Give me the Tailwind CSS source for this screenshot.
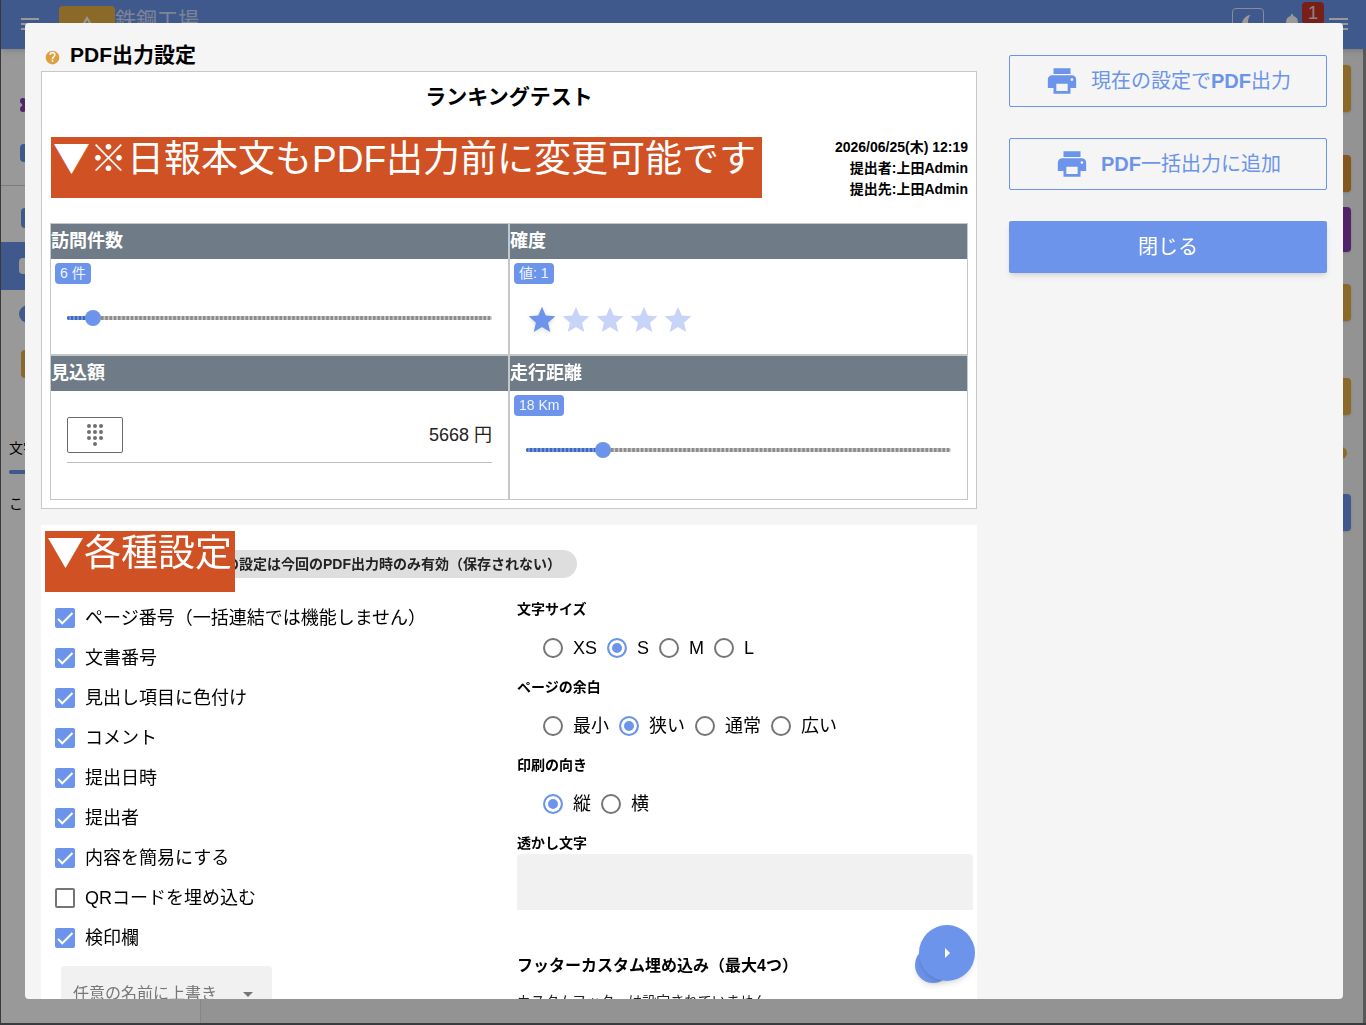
<!DOCTYPE html>
<html lang="ja">
<head>
  <meta charset="UTF-8" />
  <meta name="viewport" content="width=device-width, initial-scale=1" />
  <title>PDF出力設定</title>
  <script src="https://cdn.jsdelivr.net/npm/@tailwindcss/browser@4"></script>
</head>
<body class="h-screen overflow-hidden font-['Liberation_Sans','Noto_Sans_CJK_JP',sans-serif] text-black">

  <!-- 背面の日報画面 -->
  <div class="h-full flex flex-col border-l border-l-[#616164] border-b-2 border-b-[#5c6470] bg-[#f5f5f5]">
    <header class="h-[49px] shrink-0 bg-[#6b94ea] shadow-md flex items-start pl-5 pr-[18px] z-10">
      <svg class="w-[18px] h-3 mt-[18px]" viewBox="0 0 18 12" fill="#fff"><path d="M0 0h18v2H0zM0 5h18v2H0zM0 10h18v2H0z" /></svg>
      <div class="ml-5 mt-1.5 w-14 h-9 rounded-sm bg-[#e8b044] flex justify-center pt-2">
        <svg class="w-6 h-6" viewBox="0 0 24 24" fill="none" stroke="#fff" stroke-width="2"><path d="M12 4 22 21H2z" /></svg>
      </div>
      <span class="text-[21px] leading-8 mt-1 text-white/70">鉄鋼工場</span>
      <div class="ml-auto mt-2 w-8 h-8 rounded-sm border border-white/80 flex justify-center pt-1">
        <svg class="w-5 h-5" viewBox="0 0 24 24" fill="#fff"><path d="M15 2C10 3 5 7 5 13c0 5 4 9 9 9 3 0 5-1 7-3-5 0-9-3-9-8 0-4 1-6 3-9z" /></svg>
      </div>
      <svg class="ml-[18px] mt-3 w-5 h-5" viewBox="0 0 24 24" fill="#fff"><path d="M12 22a2 2 0 0 0 2-2h-4a2 2 0 0 0 2 2zm7-6v-5c0-3-2-5.600-5.500-6.300V4a1.500 1.500 0 0 0-3 0v.7C7 5.400 5 7.900 5 11v5l-2 2v1h18v-1z" /></svg>
      <span class="mt-0.5 w-[22px] h-[22px] rounded-sm bg-[#c8352a] text-white/80 text-lg leading-[22px] text-center">1</span>
      <svg class="ml-[5px] mt-[18px] w-[19px] h-3" viewBox="0 0 19 12" fill="#fff"><path d="M0 0h19v2H0zM0 5h19v2H0zM0 10h19v2H0z" /></svg>
    </header>
    <div class="flex-1 flex">
      <aside class="w-[200px] bg-white border-r border-[#e0e0e0] pt-8">
        <div class="h-12 pl-[18px] flex items-center"><svg class="w-4 h-4" viewBox="0 0 16 16" fill="#883cb0"><circle cx="4" cy="4" r="3" /><circle cx="4" cy="12" r="3" /><circle cx="12" cy="4" r="3" /><circle cx="12" cy="12" r="3" /><circle cx="8" cy="8" r="5" /></svg></div>
        <div class="h-12 pl-[19px] flex items-center"><div class="w-[18px] h-[18px] rounded-sm bg-[#6b94ea]"></div></div>
        <div class="mt-2 border-t border-[#d0d0d0] pt-2">
          <div class="h-12 pl-5 flex items-center"><div class="w-4 h-5 rounded-sm bg-[#6b94ea]"></div></div>
          <div class="h-12 pl-[18px] flex items-center bg-[#6b94ea]"><div class="w-5 h-4 rounded-sm bg-white"></div></div>
          <div class="h-12 pl-[18px] flex items-center"><div class="w-[18px] h-[18px] rounded-full bg-[#6b94ea]"></div></div>
          <div class="h-[52px] pl-5 flex items-center"><div class="w-4 h-7 rounded-sm bg-[#e8b044]"></div></div>
        </div>
        <p class="pl-2 mt-12 text-sm leading-5">文字</p>
        <div class="ml-2 mt-3 mr-8 h-1 rounded-full bg-[#6b94ea]"></div>
        <p class="pl-2 mt-5 text-sm leading-5">こ</p>
      </aside>
      <div class="flex-1 flex flex-col items-end pt-4 pr-3 border-r-[3px] border-[#959595]">
        <div class="w-20 h-[47px] rounded-sm shadow bg-[#e8b044]"></div>
        <div class="w-20 h-[37px] mt-[43px] rounded-sm shadow bg-[#dd9233]"></div>
        <div class="w-20 h-[45px] mt-[15px] rounded-sm shadow bg-[#883cb0]"></div>
        <div class="w-20 h-[37px] mt-8 rounded-sm shadow bg-[#e8b044]"></div>
        <div class="w-20 h-[37px] mt-[57px] rounded-sm shadow bg-[#e8b044]"></div>
        <div class="w-3 h-3 mt-8 mr-1 rounded-full bg-[#e8b044]"></div>
        <div class="w-20 h-[37px] mt-[35px] rounded-sm shadow bg-[#6b94ea]"></div>
      </div>
    </div>
  </div>

  <!-- モーダル -->
  <div class="fixed inset-0 z-20 bg-black/40 pt-[23px] pr-[23px] pb-[26px] pl-[25px]">
    <div role="dialog" aria-labelledby="dialog-title" class="relative h-full overflow-hidden rounded bg-[#f5f5f5] flex gap-8 px-4">

      <div class="flex-1 min-w-0 overflow-y-auto [scrollbar-width:none] pt-4">
        <div class="flex items-center h-8 pl-1 gap-2.5">
          <svg class="w-[15px] h-[15px] mt-1" viewBox="0 0 24 24" fill="#dda03c"><path d="M12 1a11 11 0 1 0 0 22 11 11 0 0 0 0-22zm1.300 18h-2.600v-2.600h2.600zm2.600-8.700-1.100 1.200c-.9.900-1.500 1.700-1.500 3.500h-2.600v-.6c0-1.400.6-2.600 1.500-3.500l1.500-1.500c.4-.4.600-.9.600-1.500a2.300 2.300 0 0 0-4.600 0H7a5 5 0 0 1 10 0c0 1-.4 1.900-1.100 2.400z" /></svg>
          <h1 id="dialog-title" class="text-[21px] leading-8 font-bold">PDF出力設定</h1>
        </div>

        <!-- プレビュー -->
        <section class="bg-white border border-[#c8c8c8] px-2 pb-2">
          <h2 class="text-center text-[21px] leading-[49px] font-bold">ランキングテスト</h2>
          <div class="flex justify-between items-start pt-4">
            <p class="ml-px h-[61px] bg-[#cf5124] text-white text-[37px] leading-[38px] pl-0.5 pr-1.5 whitespace-nowrap"><span class="font-['Noto_Sans_CJK_JP',sans-serif]">▼</span>※日報本文もPDF出力前に変更可能です</p>
            <div class="text-right text-sm leading-[21px] font-bold">
              <p>2026/06/25(木) 12:19</p>
              <p>提出者:上田Admin</p>
              <p>提出先:上田Admin</p>
            </div>
          </div>

          <div class="mt-[23px] grid grid-cols-2">
            <div class="border border-[#c5c8c9] h-[132px]">
              <h3 class="bg-[#6f7b86] text-white text-lg leading-[35px] font-bold">訪問件数</h3>
              <div class="p-1 pb-px"><span class="inline-block align-top rounded bg-[#6b94ea] text-white/90 text-sm leading-[21px] px-[5px]">6 件</span></div>
              <div class="px-4 pt-5">
                <div class="relative h-[20px] flex items-center">
                  <div class="w-full h-1 rounded-full bg-[linear-gradient(to_right,#8c8c8c_50%,#c8c8c8_50%)] bg-[length:1%_100%]"></div>
                  <div class="absolute left-0 h-1 rounded-l-full bg-[repeating-linear-gradient(to_right,#4468b0_0_2px,#6b94ea_2px_4px)]" style="width: 6%"></div>
                  <input type="range" min="0" max="100" value="6" aria-label="訪問件数" class="absolute -inset-x-2 h-4 appearance-none bg-transparent [&::-webkit-slider-thumb]:appearance-none [&::-webkit-slider-thumb]:w-4 [&::-webkit-slider-thumb]:h-4 [&::-webkit-slider-thumb]:rounded-full [&::-webkit-slider-thumb]:bg-[#6b94ea]" />
                </div>
              </div>
            </div>
            <div class="border border-[#c5c8c9] h-[132px]">
              <h3 class="bg-[#6f7b86] text-white text-lg leading-[35px] font-bold">確度</h3>
              <div class="p-1 pb-px"><span class="inline-block align-top rounded bg-[#6b94ea] text-white/90 text-sm leading-[21px] px-[5px]">値: 1</span></div>
              <div class="flex gap-0.5 px-4 pt-4">
                <svg class="w-8 h-8 drop-shadow-sm" viewBox="0 0 24 24" fill="#6b94ea"><path d="M12 17.270 18.180 21l-1.640-7.030L22 9.240l-7.190-.61L12 2 9.190 8.630 2 9.240l5.460 4.730L5.820 21z" /></svg>
                <svg class="w-8 h-8" viewBox="0 0 24 24" fill="#c8d4f7"><path d="M12 17.270 18.180 21l-1.640-7.030L22 9.240l-7.190-.61L12 2 9.190 8.630 2 9.240l5.460 4.730L5.820 21z" /></svg>
                <svg class="w-8 h-8" viewBox="0 0 24 24" fill="#c8d4f7"><path d="M12 17.270 18.180 21l-1.640-7.030L22 9.240l-7.190-.61L12 2 9.190 8.630 2 9.240l5.460 4.730L5.820 21z" /></svg>
                <svg class="w-8 h-8" viewBox="0 0 24 24" fill="#c8d4f7"><path d="M12 17.270 18.180 21l-1.640-7.030L22 9.240l-7.190-.61L12 2 9.190 8.630 2 9.240l5.460 4.730L5.820 21z" /></svg>
                <svg class="w-8 h-8" viewBox="0 0 24 24" fill="#c8d4f7"><path d="M12 17.270 18.180 21l-1.640-7.030L22 9.240l-7.190-.61L12 2 9.190 8.630 2 9.240l5.460 4.730L5.820 21z" /></svg>
              </div>
            </div>
            <div class="border border-[#c5c8c9] h-[145px]">
              <h3 class="bg-[#6f7b86] text-white text-lg leading-[35px] font-bold">見込額</h3>
              <div class="mx-4 mt-[26px] pb-[9px] border-b border-[#bdbdbd] flex items-center justify-between">
                <button type="button" aria-label="電卓" class="w-14 h-9 shrink-0 rounded-xs border border-[#6a6a6a] flex items-center justify-center">
                  <svg class="w-6 h-6" viewBox="0 0 24 24" fill="#6f6f6f"><circle cx="6" cy="3" r="2" /><circle cx="12" cy="3" r="2" /><circle cx="18" cy="3" r="2" /><circle cx="6" cy="9" r="2" /><circle cx="12" cy="9" r="2" /><circle cx="18" cy="9" r="2" /><circle cx="6" cy="15" r="2" /><circle cx="12" cy="15" r="2" /><circle cx="18" cy="15" r="2" /><circle cx="12" cy="21" r="2" /></svg>
                </button>
                <input type="text" value="5668 円" aria-label="見込額" class="min-w-0 flex-1 text-right text-lg text-[#222] bg-transparent" />
              </div>
            </div>
            <div class="border border-[#c5c8c9] h-[145px]">
              <h3 class="bg-[#6f7b86] text-white text-lg leading-[35px] font-bold">走行距離</h3>
              <div class="p-1 pb-px"><span class="inline-block align-top rounded bg-[#6b94ea] text-white/90 text-sm leading-[21px] px-[5px]">18 Km</span></div>
              <div class="px-4 pt-5">
                <div class="relative h-[20px] flex items-center">
                  <div class="w-full h-1 rounded-full bg-[linear-gradient(to_right,#8c8c8c_50%,#c8c8c8_50%)] bg-[length:1%_100%]"></div>
                  <div class="absolute left-0 h-1 rounded-l-full bg-[repeating-linear-gradient(to_right,#4468b0_0_2px,#6b94ea_2px_4px)]" style="width: 18%"></div>
                  <input type="range" min="0" max="100" value="18" aria-label="走行距離" class="absolute -inset-x-2 h-4 appearance-none bg-transparent [&::-webkit-slider-thumb]:appearance-none [&::-webkit-slider-thumb]:w-4 [&::-webkit-slider-thumb]:h-4 [&::-webkit-slider-thumb]:rounded-full [&::-webkit-slider-thumb]:bg-[#6b94ea]" />
                </div>
              </div>
            </div>
          </div>
        </section>

        <!-- 各種設定 -->
        <section class="mt-4 bg-white px-1 pt-1.5 pb-8">
          <div class="flex items-end">
            <h2 class="relative z-10 h-[61px] bg-[#cf5124] text-white text-[37px] leading-[38px] pl-0.5 pr-[3px] whitespace-nowrap"><span class="font-['Noto_Sans_CJK_JP',sans-serif]">▼</span>各種設定</h2>
            <p class="-ml-10 mb-3.5 rounded-full bg-[#dedede] text-[#222] text-sm leading-7 font-bold px-4 whitespace-nowrap">この設定は今回のPDF出力時のみ有効（保存されない）</p>
          </div>

          <div class="grid grid-cols-2 pt-1.5">
            <div class="pl-2.5" id="checks"></div>

            <div class="pl-2">
              <fieldset class="h-[78px]">
                <legend class="text-sm leading-[22px] font-bold">文字サイズ</legend>
                <div class="flex gap-2.5 pl-[26px] pt-3 text-lg leading-8" data-name="size" data-options="XS,S,M,L" data-value="S"></div>
              </fieldset>
              <fieldset class="h-[78px]">
                <legend class="text-sm leading-[22px] font-bold">ページの余白</legend>
                <div class="flex gap-2.5 pl-[26px] pt-3 text-lg leading-8" data-name="margin" data-options="最小,狭い,通常,広い" data-value="狭い"></div>
              </fieldset>
              <fieldset class="h-[78px]">
                <legend class="text-sm leading-[22px] font-bold">印刷の向き</legend>
                <div class="flex gap-2.5 pl-[26px] pt-3 text-lg leading-8" data-name="direction" data-options="縦,横" data-value="縦"></div>
              </fieldset>
              <label for="watermark" class="block text-sm leading-[22px] font-bold">透かし文字</label>
              <input id="watermark" type="text" class="block w-full h-14 rounded-t bg-[#f1f1f1] px-3 text-base" />
              <h3 class="mt-11 text-base leading-6 font-bold">フッターカスタム埋め込み（最大4つ）</h3>
              <p class="mt-3 text-sm leading-[22px] text-[#222]">カスタムフッターは設定されていません</p>
            </div>
          </div>
        </section>
      </div>

      <!-- 操作ボタン -->
      <div class="w-[318px] shrink-0 flex flex-col gap-[31px] pt-8 text-xl">
        <button type="button" class="h-[52px] rounded-xs border border-[#6b94ea] text-[#6b94ea] flex items-center justify-center gap-3">
          <svg class="w-[34px] h-[34px]" viewBox="0 0 24 24" fill="currentColor"><path d="M19 8H5a3 3 0 0 0-3 3v6h4v4h12v-4h4v-6a3 3 0 0 0-3-3zm-3 11H8v-5h8zm3-7a1 1 0 1 1 0-2 1 1 0 0 1 0 2zM18 3H6v4h12z" /></svg>
          <span>現在の設定で<span class="font-bold">PDF</span>出力</span>
        </button>
        <button type="button" class="h-[52px] rounded-xs border border-[#6b94ea] text-[#6b94ea] flex items-center justify-center gap-3">
          <svg class="w-[34px] h-[34px]" viewBox="0 0 24 24" fill="currentColor"><path d="M19 8H5a3 3 0 0 0-3 3v6h4v4h12v-4h4v-6a3 3 0 0 0-3-3zm-3 11H8v-5h8zm3-7a1 1 0 1 1 0-2 1 1 0 0 1 0 2zM18 3H6v4h12z" /></svg>
          <span><span class="font-bold">PDF</span>一括出力に追加</span>
        </button>
        <button type="button" class="h-[52px] rounded-xs bg-[#6b94ea] text-white shadow-md">閉じる</button>
      </div>

      <!-- フローティングボタン -->
      <div class="absolute right-[368px] bottom-4 w-[60px] h-[58px]">
        <div class="absolute left-0 bottom-0 w-9 h-9 rounded-full bg-[#6b94ea] shadow-md"></div>
        <button type="button" aria-label="開く" class="absolute right-0 top-0 w-14 h-14 rounded-full bg-[#6b94ea] shadow-md flex items-center justify-center">
          <svg class="w-6 h-6" viewBox="0 0 24 24" fill="#fff"><path d="M10 17l5-5-5-5z" /></svg>
        </button>
      </div>
    </div>
  </div>

  <script>
    const checks = [
      ['ページ番号（一括連結では機能しません）', true],
      ['文書番号', true],
      ['見出し項目に色付け', true],
      ['コメント', true],
      ['提出日時', true],
      ['提出者', true],
      ['内容を簡易にする', true],
      ['QRコードを埋め込む', false],
      ['検印欄', true]
    ];

    document.getElementById('checks').innerHTML = checks.map(([text, on]) => `
      <label class="flex items-center gap-2.5 h-10 text-lg leading-8">
        <span class="grid">
          <input type="checkbox" ${on ? 'checked' : ''} class="peer col-start-1 row-start-1 appearance-none w-5 h-5 rounded-xs border-2 border-[#757575] checked:border-[#6b94ea] checked:bg-[#6b94ea]" />
          <svg class="col-start-1 row-start-1 w-5 h-5 pointer-events-none invisible peer-checked:visible" viewBox="0 0 20 20" fill="none" stroke="#fff" stroke-width="2"><path d="M3 11l4.300 4.300L17.500 5" /></svg>
        </span>
        <span>${text}</span>
      </label>
    `).join('') + `
      <div class="grid w-[211px] mt-2 ml-1.5">
        <select aria-label="任意の名前に上書き" class="col-start-1 row-start-1 appearance-none h-14 rounded-t bg-[#f1f1f1] pl-3 text-base text-[#777]">
          <option>任意の名前に上書き</option>
        </select>
        <svg class="col-start-1 row-start-1 justify-self-end self-center mr-3 w-6 h-6 pointer-events-none" viewBox="0 0 24 24" fill="#757575"><path d="M7 10l5 5 5-5z" /></svg>
      </div>
    `;

    document.querySelectorAll('[data-options]').forEach(row => {
      row.innerHTML = row.dataset.options.split(',').map(text => `
        <label class="flex items-center gap-2.5">
          <input type="radio" name="${row.dataset.name}" ${text === row.dataset.value ? 'checked' : ''} class="appearance-none w-5 h-5 rounded-full border-2 border-[#757575] checked:border-[#6b94ea] checked:bg-[#6b94ea] checked:shadow-[inset_0_0_0_3px_white]" />
          <span>${text}</span>
        </label>
      `).join('');
    });
  </script>
</body>
</html>
